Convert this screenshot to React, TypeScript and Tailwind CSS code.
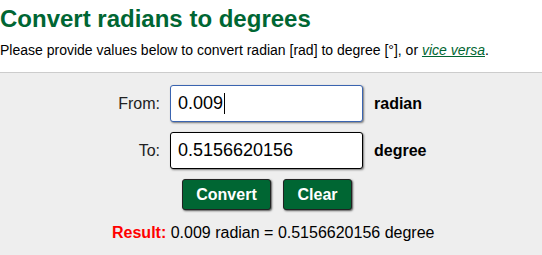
import React from 'react';

export default function App() {
  return (
    <div className="w-[542px] h-[255px] overflow-hidden bg-white font-['Liberation_Sans',Arial,sans-serif]">
      <h1 className="pt-[4px] text-[24px] leading-[30px] font-bold text-[#006633]">Convert radians to degrees</h1>
      <p className="mt-[7px] text-[14px] leading-[18px] text-black">
        Please provide values below to convert radian [rad] to degree [°], or{' '}
        <a className="italic text-[#006633] underline">vice versa</a>.
      </p>
      <div className="mt-[13px] h-[200px] border-t border-[#cccccc] bg-[#eeeeee] pt-[12px]">
        <div className="flex items-center">
          <div className="w-[170px] pr-[10px] text-right text-[16px] text-[#222]">From:</div>
          <div className="flex h-[37px] w-[193px] items-center rounded-[3px] border border-[#3a64b0] bg-white pl-[7px] text-[18px] text-black shadow-[1px_1px_2px_#777]">
            0.009<span className="ml-[1px] inline-block h-[21px] w-[1px] bg-black" />
          </div>
          <div className="pl-[11px] text-[16px] font-bold text-black">radian</div>
        </div>
        <div className="mt-[10px] flex items-center">
          <div className="w-[170px] pr-[10px] text-right text-[16px] text-[#222]">To:</div>
          <div className="flex h-[37px] w-[193px] items-center rounded-[3px] border border-black bg-white pl-[7px] text-[18px] text-black shadow-[1px_1px_2px_#777]">
            0.5156620156
          </div>
          <div className="pl-[11px] text-[16px] font-bold text-black">degree</div>
        </div>
        <div className="mt-[10px] flex gap-[12px] pl-[182px]">
          <button className="h-[31px] w-[89px] rounded-[3px] border border-[#222] bg-[#006633] text-[16px] font-bold text-white shadow-[1px_1px_2px_#555]">Convert</button>
          <button className="h-[31px] w-[69px] rounded-[3px] border border-[#222] bg-[#006633] text-[16px] font-bold text-white shadow-[1px_1px_2px_#555]">Clear</button>
        </div>
        <div className="mt-[11px] pl-[112px] text-[16px] text-black">
          <span className="font-bold text-[#ff0000]">Result:</span> 0.009 radian = 0.5156620156 degree
        </div>
      </div>
    </div>
  );
}
